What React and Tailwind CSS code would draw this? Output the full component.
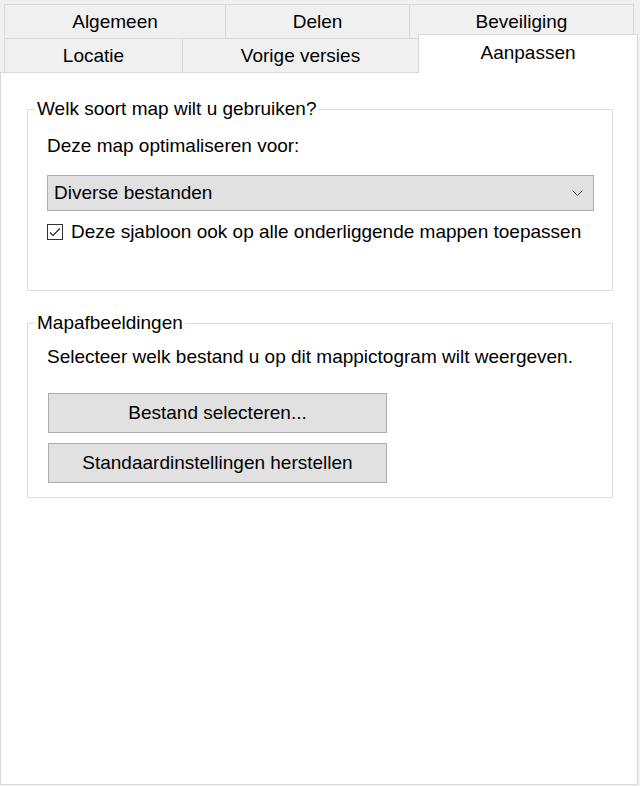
import React from "react";

const font = { fontFamily: '"Liberation Sans", Arial, sans-serif' };

function Tab({ label, className }) {
  return (
    <div className={`flex items-center justify-center bg-[#f0f0f0] border-[#d9d9d9] text-[19px] leading-[24px] text-black ${className}`}>
      {label}
    </div>
  );
}

function GrayButton({ children }) {
  return (
    <button className="ml-px w-[339px] h-[40px] bg-[#e1e1e1] border border-[#adadad] text-[19px] leading-[24px] text-black">
      {children}
    </button>
  );
}

export default function App() {
  return (
    <div className="w-[640px] h-[786px] bg-[#f0f0f0] flex flex-col pt-[4px]" style={font}>
      {/* bovenste rij tabs */}
      <div className="flex ml-[4px] h-[34px]">
        <Tab label="Algemeen" className="w-[221px] border-t border-l" />
        <Tab label="Delen" className="w-[184px] border-t border-l" />
        <Tab label="Beveiliging" className="w-[225px] border-t border-l border-r" />
      </div>

      {/* tweede rij tabs */}
      <div className="flex items-end ml-[4px] h-[38px] -mt-[4px]">
        <Tab label="Locatie" className="w-[178px] h-[34px] border-t border-l" />
        <Tab label="Vorige versies" className="w-[236px] h-[34px] border-t border-l" />
        <div className="relative z-10 w-[220px] h-[39px] -mb-px pb-[2px] flex items-center justify-center bg-white border-t border-l border-r border-[#d9d9d9] text-[19px] leading-[24px] text-black">
          Aanpassen
        </div>
      </div>

      {/* pagina */}
      <div className="w-[638px] h-[713px] bg-white border border-[#d9d9d9] pl-[26px] pt-[24px]">
        <fieldset className="w-[586px] border border-[#dcdcdc] pl-[19px] pr-[18px] pb-[46px]">
          <legend className="-ml-[12px] px-[2px] text-[19px] leading-[24px] text-black">
            Welk soort map wilt u gebruiken?
          </legend>
          <div className="mt-[13px] text-[19px] leading-[24px] text-black">Deze map optimaliseren voor:</div>
          <div className="mt-[17px] h-[36px] bg-[#e1e1e1] border border-[#adadad] flex items-center justify-between pl-[6px] pr-[10px] text-[19px] leading-[24px] text-black">
            <span>Diverse bestanden</span>
            <svg width="11" height="7" viewBox="0 0 11 7" fill="none">
              <path d="M0.5 0.5 L5.5 5.5 L10.5 0.5" stroke="#555" strokeWidth="1" />
            </svg>
          </div>
          <div className="mt-[9px] h-[24px] flex items-center gap-[8px] text-[19px] leading-[24px] text-black">
            <div className="w-[16px] h-[16px] border border-[#333] bg-white flex items-center justify-center">
              <svg width="14" height="14" viewBox="0 0 14 14" fill="none">
                <path d="M2 7.5 L5 10.5 L12 3.5" stroke="#222" strokeWidth="1.1" />
              </svg>
            </div>
            <span>Deze sjabloon ook op alle onderliggende mappen toepassen</span>
          </div>
        </fieldset>

        <fieldset className="mt-[20px] w-[586px] border border-[#dcdcdc] pl-[19px] pr-[18px] pb-[14px]">
          <legend className="-ml-[12px] px-[2px] text-[19px] leading-[24px] text-black">Mapafbeeldingen</legend>
          <div className="mt-[10px] text-[19px] leading-[24px] text-black">
            Selecteer welk bestand u op dit mappictogram wilt weergeven.
          </div>
          <div className="mt-[24px] flex flex-col gap-[10px]">
            <GrayButton>Bestand selecteren...</GrayButton>
            <GrayButton>Standaardinstellingen herstellen</GrayButton>
          </div>
        </fieldset>
      </div>
    </div>
  );
}
